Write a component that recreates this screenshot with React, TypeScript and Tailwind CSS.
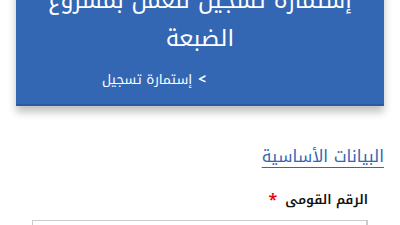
const FONT = "font-['Noto_Kufi_Arabic',sans-serif]";

export default function App() {
  return (
    <div dir="rtl" className={`w-[400px] h-[225px] overflow-hidden bg-white ${FONT}`}>
      <div className="-mt-[16px]">
        {/* page banner */}
        <div className="mx-4 h-[122px] bg-[#3366b3] border-b-2 border-[#2d5a9e] shadow-[0_6px_8px_rgba(0,0,0,0.25)] flex flex-col">
          <h1 className="-mt-[2.5px] text-center text-white text-[23px] leading-[38px] whitespace-nowrap">
            إستمارة تسجيل للعمل بمشروع
            <br />
            الضبعة
          </h1>
          <div className="mt-[13.5px] pr-[178px] text-white text-[13.5px] leading-[18px]">
            <span className="ml-[6px] font-bold">&gt;</span>
            <span>إستمارة تسجيل</span>
          </div>
        </div>

        {/* form section */}
        <div className="px-4 pt-[38px]">
          <h2 className="text-[#3366b3] text-[16.5px] leading-[26px] underline underline-offset-[5px]">
            البيانات الأساسية
          </h2>
          <div className="mx-4 mt-[20px]">
            <label className="flex items-center gap-[8px] text-[13px] font-semibold text-[#111] leading-[20px]">
              <span>الرقم القومى</span>
              <span className="text-red-600 text-[16px]">*</span>
            </label>
            <div className="mt-[10px] flex h-[34px] border border-[#ccc]">
              <span className="w-[45px] border-l border-[#ccc] bg-white"></span>
              <input className="flex-1 px-3 outline-none" />
            </div>
          </div>
        </div>
      </div>
    </div>
  );
}
